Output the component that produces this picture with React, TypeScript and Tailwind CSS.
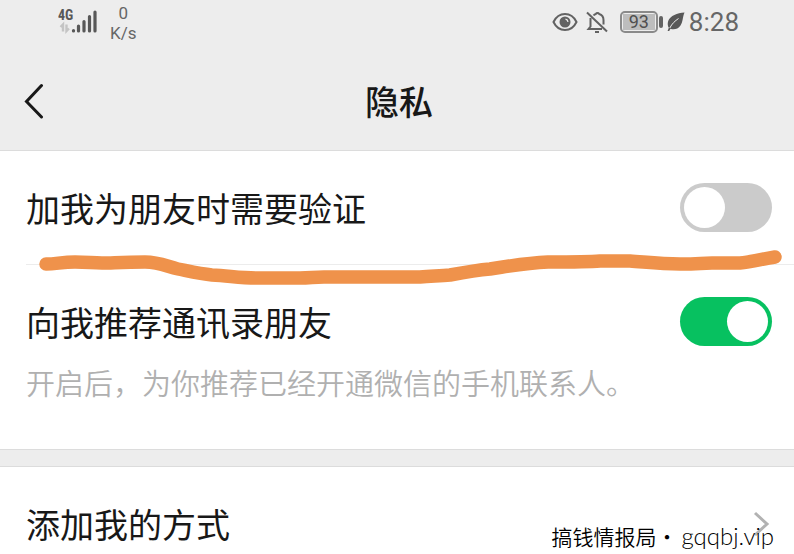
import React, { useState } from "react";

interface SwitchRowProps {
  id: string;
  label: string;
  note?: string;
  defaultOn: boolean;
}

function EyeIcon() {
  return (
    <svg width="26" height="20" viewBox="0 0 26 20" fill="none" aria-hidden="true">
      <path
        d="M1.500 10C4 4.800 8 2 13 2s9 2.800 11.500 8C22 15.200 18 18 13 18S4 15.200 1.500 10Z"
        stroke="#626262"
        strokeWidth="2"
      />
      <circle cx="13" cy="10" r="5.500" fill="#626262" />
      <path d="M13.500 7.200a3 3 0 0 1 2.500 2.600" stroke="#ededed" strokeWidth="1.300" />
    </svg>
  );
}

function BellOffIcon() {
  return (
    <svg width="22" height="24" viewBox="0 0 22 24" fill="none" stroke="#626262" strokeWidth="2" aria-hidden="true">
      <path d="M4.500 8v8.500L2.500 19H16" />
      <path d="M7.500 5.500C8.200 4.600 9 4.200 9.800 4a2 2 0 0 1 3.400 0c2.800.8 4.300 2.800 4.300 6v4.500" />
      <path d="M1 2.500 21 21.500" />
      <path d="M9 22h4" />
    </svg>
  );
}

function LeafIcon() {
  return (
    <svg width="18" height="20" viewBox="0 0 18 20" aria-hidden="true">
      <path
        d="M17.500.5C10 1.200 3.500 3.500 1.200 9 .3 12 .8 14 1.800 15.800L.6 19h1.600l1.300-2.200c3.500 1.200 7.500.4 10-3.300C16 10 15.500 5 17.500.5Z"
        fill="#585858"
      />
      <path d="M2.800 16C5 11.500 8 9 11.500 6.500" stroke="#ededed" strokeWidth="1" fill="none" />
    </svg>
  );
}

function SignalIcon() {
  return (
    <svg width="40" height="28" viewBox="0 0 40 28" aria-hidden="true">
      <g stroke="#585858" strokeWidth="3.200" strokeLinecap="round">
        <path d="M15.500 23.500v.5M20.500 19v5M26 14.500V24M31.500 9.500V24M37 5v19" />
      </g>
      <g stroke="#c4c4c4" strokeWidth="2.400" fill="none">
        <path d="M5 24.500V17.500L2.500 20M8.500 17.500V24l2.500-2.500" />
      </g>
      <text
        x="0"
        y="13"
        fontSize="14"
        fontWeight="700"
        fill="#585858"
        className="font-['Roboto_Condensed','Roboto',sans-serif]"
      >
        4G
      </text>
    </svg>
  );
}

function StatusBar() {
  return (
    <div className="flex h-12 items-start justify-between pl-[58px] pr-[55px] font-['Roboto',sans-serif] text-[#666]">
      <div className="flex items-start gap-3 pt-[3px]">
        <div className="pt-1">
          <SignalIcon />
        </div>
        <div className="flex flex-col items-center text-[17px] leading-5">
          <span>0</span>
          <span>K/s</span>
        </div>
      </div>
      <div className="flex h-11 items-center">
        <EyeIcon />
        <div className="ml-2">
          <BellOffIcon />
        </div>
        <div className="ml-3 flex items-center gap-px">
          <div className="rounded-[5px] border-2 border-[#8a8a8a] p-px">
            <div className="flex h-4 w-8 items-center justify-center bg-[#bdbdbd] text-lg leading-4 text-[#4f4f4f]">
              93
            </div>
          </div>
          <div className="h-3 w-1 rounded-sm bg-[#626262]" />
        </div>
        <div className="ml-1">
          <LeafIcon />
        </div>
        <span className="ml-1 text-[26px] leading-8">8:28</span>
      </div>
    </div>
  );
}

function SwitchRow({ id, label, note, defaultOn }: SwitchRowProps) {
  const [on, setOn] = useState(defaultOn);

  return (
    <div className="pl-[26px] pr-[22px]">
      <div className="flex h-[113px] items-center justify-between">
        <label htmlFor={id} className="text-[34px] leading-[50px]">
          {label}
        </label>
        <input
          id={id}
          type="checkbox"
          role="switch"
          checked={on}
          onChange={(e) => setOn(e.target.checked)}
          className="flex h-[49px] w-[92px] shrink-0 appearance-none items-center rounded-full bg-[#cbcbcb] px-1 before:size-[41px] before:rounded-full before:bg-white before:content-[''] checked:justify-end checked:bg-[#07c160]"
        />
      </div>
      {note && (
        <p className="-mt-[18px] pb-[45px] text-[29px] font-[350] leading-[44px] text-[#b0b0b0]">
          {note}
        </p>
      )}
    </div>
  );
}

export default function App() {
  return (
    <div className="relative h-screen overflow-hidden bg-white font-['Noto_Sans_CJK_SC',sans-serif] text-[#181818]">
      <header className="border-b border-[#dcdcdc] bg-[#ededed]">
        <StatusBar />
        <div className="grid h-[102px] grid-cols-[1fr_auto_1fr] items-center pl-6 pt-1">
          <button type="button" aria-label="返回" className="w-5">
            <svg width="20" height="36" viewBox="0 0 20 36" fill="none">
              <path
                d="M17.500 2.500 2.500 18.500 17.500 34"
                stroke="#181818"
                strokeWidth="3"
                strokeLinecap="round"
              />
            </svg>
          </button>
          <h1 className="pr-5 text-[34px] font-medium leading-[50px]">隐私</h1>
        </div>
      </header>

      <main>
        <section>
          <div className="relative">
            <SwitchRow id="verify" label="加我为朋友时需要验证" defaultOn={false} />
            <div className="ml-[26px] h-px bg-[#ececec]" />
            {/* Hand-drawn marker stroke over the divider */}
            <svg
              viewBox="0 0 794 40"
              className="pointer-events-none absolute -bottom-6 left-0 w-full"
              fill="none"
              aria-hidden="true"
            >
              <path
                d="M46 15C56 15 62 13 75 13S92 14 102 14 122 13 145 13C160 13 168 18 178 20S200 25 212 26C230 27 240 29 256 29H300C310 29 314 28 324 28H420C432 27 440 27 450 26 466 23 478 21 490 20 510 17 525 14 548 13 570 13 588 13 600 12H630C645 13 660 15 680 15S700 14 712 14H740C752 13 762 10 775 8"
                stroke="#ef924b"
                strokeWidth="13.500"
                strokeLinecap="round"
                strokeLinejoin="round"
              />
            </svg>
          </div>
          <SwitchRow
            id="recommend"
            label="向我推荐通讯录朋友"
            note="开启后，为你推荐已经开通微信的手机联系人。"
            defaultOn={true}
          />
        </section>

        <div className="h-[18px] border-y border-[#dcdcdc] bg-[#ededed]" />

        <a href="#methods" className="flex h-[113px] items-center justify-between pl-[26px] pr-6">
          <span className="text-[34px] leading-[50px]">添加我的方式</span>
          <svg width="18" height="28" viewBox="0 0 18 28" fill="none" aria-hidden="true">
            <path d="M3 3 15 14 3 25" stroke="#b2b2b2" strokeWidth="3" />
          </svg>
        </a>
      </main>

      <div className="absolute bottom-0 right-5 flex items-center gap-1 leading-9 text-black">
        <span className="text-[21px] font-[350]">搞钱情报局·</span>
        <span className="font-['Lato',sans-serif] text-2xl font-light">gqqbj.vip</span>
      </div>
    </div>
  );
}
